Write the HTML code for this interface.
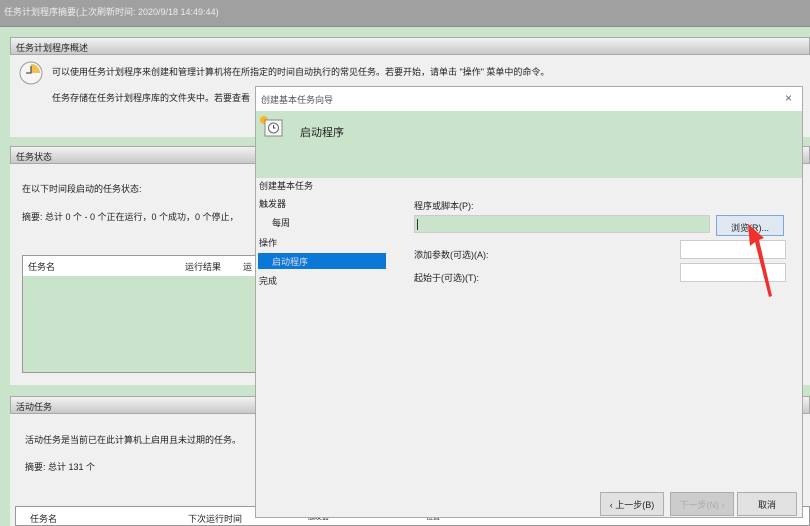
<!DOCTYPE html>
<html><head><meta charset="utf-8"><style>
*{margin:0;padding:0;box-sizing:border-box}
body{width:810px;height:526px;overflow:hidden;background:#c9e4cb;font-family:"Liberation Sans","Noto Sans CJK SC",sans-serif;font-size:9px;color:#222;position:relative}
.a{position:absolute}
.top{left:0;top:0;width:810px;height:27px;background:#a0a0a0;color:#eee;font-size:9px;padding:5px 0 0 4px;border-bottom:1px solid #8a8a8a}
.panel{background:#f0f0f0;left:10px;width:800px}
.hd{left:10px;width:800px;height:18px;background:linear-gradient(#f2f2f2,#c8c8c8);border:1px solid #a8a8a8;padding:3px 0 0 5px;font-size:9px}
.btn{border:1px solid #adadad;background:#e1e1e1;text-align:center;font-size:9px;padding-top:5px}
</style></head><body>
<div class="a top">任务计划程序摘要(上次刷新时间: 2020/9/18 14:49:44)</div>
<div class="a panel" style="top:37px;height:100px"></div>
<div class="a hd" style="top:37px">任务计划程序概述</div>
<svg class="a" style="left:18px;top:60px" width="26" height="26"><circle cx="13" cy="13" r="11" fill="#f5f5f5" stroke="#999"/><path d="M13 13 L13 4 A9 9 0 0 1 22 13 Z" fill="#f0c050"/><path d="M13 6V13H8" stroke="#555" stroke-width="1.3" fill="none"/></svg>
<div class="a" style="left:52px;top:65px">可以使用任务计划程序来创建和管理计算机将在所指定的时间自动执行的常见任务。若要开始，请单击 "操作" 菜单中的命令。</div>
<div class="a" style="left:52px;top:91px">任务存储在任务计划程序库的文件夹中。若要查看</div>
<div class="a panel" style="top:146px;height:239px"></div>
<div class="a hd" style="top:146px">任务状态</div>
<div class="a" style="left:22px;top:182px">在以下时间段启动的任务状态:</div>
<div class="a" style="left:22px;top:210px">摘要: 总计 0 个 - 0 个正在运行，0 个成功，0 个停止，</div>
<div class="a" style="left:22px;top:255px;width:240px;height:118px;border:1px solid #999;background:#c9e4cb"><div style="background:#fff;height:20px;padding:4px 0 0 5px">任务名<span style="position:absolute;left:162px">运行结果</span><span style="position:absolute;left:220px">运</span></div></div>
<div class="a panel" style="top:396px;height:130px"></div>
<div class="a hd" style="top:396px">活动任务</div>
<div class="a" style="left:25px;top:433px">活动任务是当前已在此计算机上启用且未过期的任务。</div>
<div class="a" style="left:25px;top:460px">摘要: 总计 131 个</div>
<div class="a" style="left:15px;top:506px;width:795px;height:20px;border:1px solid #999;background:#fff;padding:5px 0 0 14px">任务名<span style="position:absolute;left:172px">下次运行时间</span><span style="position:absolute;left:292px;font-size:7px">触发器</span><span style="position:absolute;left:410px;font-size:7px">位置</span></div>

<div class="a" style="left:255px;top:86px;width:548px;height:432px;background:#f0f0f0;border:1px solid #aaa">
 <div class="a" style="left:0;top:0;width:546px;height:24px;background:#fff;padding:6px 0 0 5px;color:#555">创建基本任务向导<span style="position:absolute;right:10px;top:4px;font-size:12px;color:#666">×</span></div>
 <div class="a" style="left:0;top:24px;width:546px;height:67px;background:#c9e4cb"></div>
 <svg class="a" style="left:3px;top:28px" width="26" height="26"><circle cx="5" cy="5" r="4" fill="#f6b820"/><rect x="6" y="5" width="17" height="16" fill="#f8f8f8" stroke="#888"/><circle cx="14.5" cy="13" r="5" fill="#fff" stroke="#666"/><path d="M14.5 10v3h2" stroke="#444" fill="none"/></svg>
 <div class="a" style="left:44px;top:37px;font-size:11px">启动程序</div>
 <div class="a" style="left:3px;top:92px">创建基本任务</div>
 <div class="a" style="left:3px;top:110px">触发器</div>
 <div class="a" style="left:16px;top:129px">每周</div>
 <div class="a" style="left:3px;top:149px">操作</div>
 <div class="a" style="left:2px;top:166px;width:128px;height:16px;background:#0a78d7;color:#dde;padding:2px 0 0 14px">启动程序</div>
 <div class="a" style="left:3px;top:187px">完成</div>
 <div class="a" style="left:158px;top:112px">程序或脚本(P):</div>
 <div class="a" style="left:158px;top:128px;width:296px;height:18px;background:#c9e4cb;border:1px solid #ccc"><div style="margin:3px 0 0 2px;width:1px;height:11px;background:#333"></div></div>
 <div class="a btn" style="left:460px;top:128px;width:68px;height:21px;border-color:#7aa7d8;background:#dfe8f2">浏览(R)...</div>
 <div class="a" style="left:158px;top:161px">添加参数(可选)(A):</div>
 <div class="a" style="left:424px;top:153px;width:106px;height:19px;background:#fff;border:1px solid #ccc"></div>
 <div class="a" style="left:158px;top:184px">起始于(可选)(T):</div>
 <div class="a" style="left:424px;top:176px;width:106px;height:19px;background:#fff;border:1px solid #ccc"></div>
 <div class="a btn" style="left:344px;top:405px;width:64px;height:24px">‹ 上一步(B)</div>
 <div class="a btn" style="left:414px;top:405px;width:64px;height:24px;color:#aaa;background:#ccc">下一步(N) ›</div>
 <div class="a btn" style="left:481px;top:405px;width:60px;height:24px">取消</div>
</div>
<svg class="a" style="left:740px;top:220px" width="40" height="80"><path d="M8 4 L24 18 L19 20 L32 76 L29 77 L15 22 L10 26 Z" fill="#f0302a"/></svg>
</body></html>
